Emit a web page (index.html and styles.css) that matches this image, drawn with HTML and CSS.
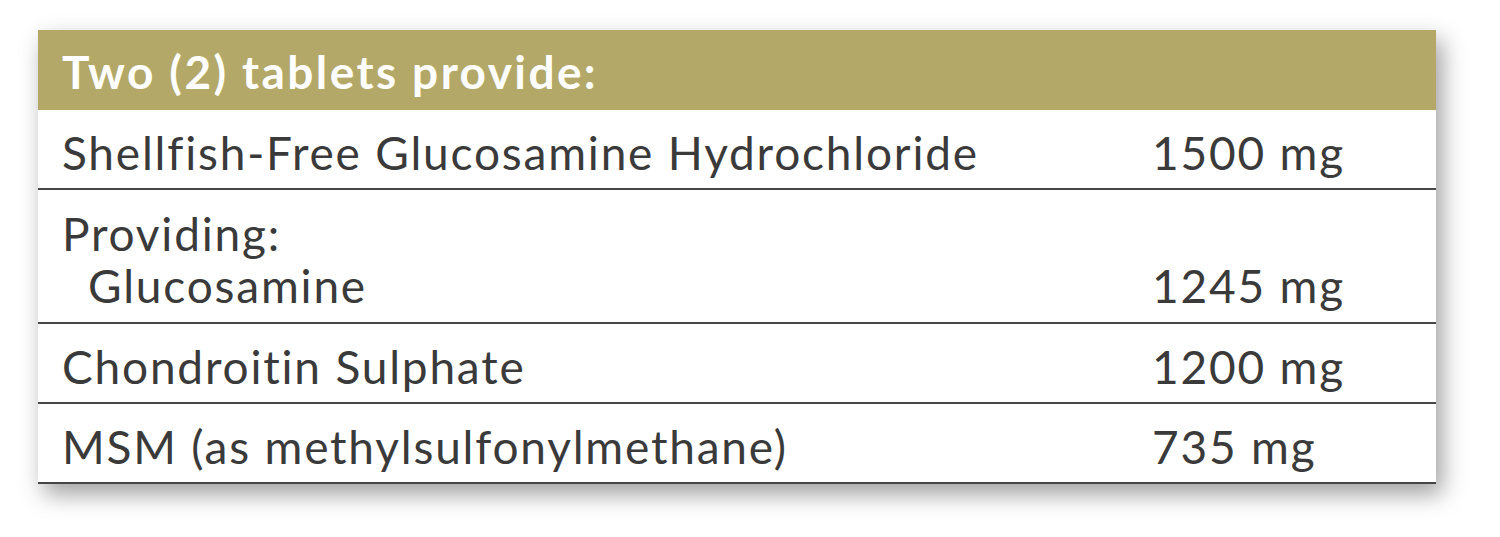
FILE: index.html
```html
<!DOCTYPE html>
<html>
<head>
<meta charset="utf-8">
<link rel="stylesheet" href="styles.css">
</head>
<body>
<div class="panel">
  <div class="head">Two (2) tablets provide:</div>
  <div class="row">
    <div class="name">Shellfish-Free Glucosamine Hydrochloride</div>
    <div class="amt">1500 mg</div>
  </div>
  <div class="row tall">
    <div class="name">Providing:<br><span class="sub">Glucosamine</span></div>
    <div class="amt second">1245 mg</div>
  </div>
  <div class="row">
    <div class="name">Chondroitin Sulphate</div>
    <div class="amt">1200 mg</div>
  </div>
  <div class="row">
    <div class="name">MSM (as methylsulfonylmethane)</div>
    <div class="amt">735 mg</div>
  </div>
</div>
</body>
</html>
```
FILE: styles.css
```css
html, body {
  margin: 0;
  padding: 0;
  background: #ffffff;
}
body {
  padding: 30px 64px 0 38px;
  height: 537px;
  box-sizing: border-box;
  overflow: hidden;
  font-family: "Lato", "Liberation Sans", sans-serif;
  font-variant-ligatures: none;
  font-feature-settings: "liga" 0;
}
.panel {
  width: 1398px;
  background: #ffffff;
  box-shadow: 6px 10px 22px rgba(0, 0, 0, 0.38);
}
.head {
  background: #b3a867;
  color: #ffffff;
  font-weight: 700;
  font-size: 46px;
  letter-spacing: 2.4px;
  height: 80px;
  line-height: 84px;
  padding-left: 24px;
  box-sizing: border-box;
}
.row {
  display: grid;
  grid-template-columns: 1114px 1fr;
  border-bottom: 2px solid #454545;
  color: #3a3a3a;
  font-size: 46px;
  letter-spacing: 1.8px;
  line-height: 74px;
  padding-top: 6px;
  height: 80px;
  box-sizing: border-box;
}
.row.tall {
  height: 134px;
  line-height: 52px;
  padding-top: 18px;
}
.name {
  padding-left: 24px;
}
.sub {
  padding-left: 26px;
}
.amt.second {
  padding-top: 52px;
}
```
